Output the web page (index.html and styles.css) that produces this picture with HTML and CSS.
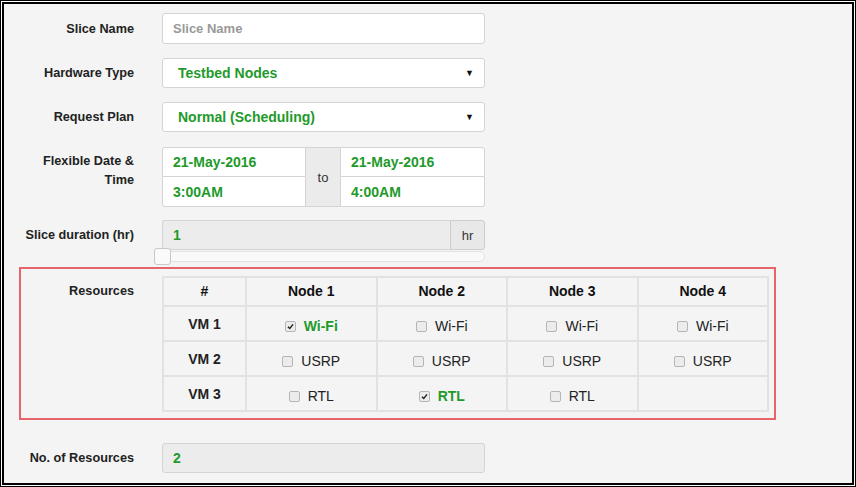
FILE: index.html
```html
<!DOCTYPE html>
<html>
<head>
<meta charset="utf-8">
<link rel="stylesheet" href="styles.css">
</head>
<body>
<div class="frame">
  <div class="inner">
    <div class="row r1">
      <div class="label">Slice Name</div>
      <div class="field"><span class="placeholder">Slice Name</span></div>
    </div>
    <div class="row r2">
      <div class="label">Hardware Type</div>
      <div class="field select"><span class="val sel">Testbed Nodes</span><span class="arrow">▼</span></div>
    </div>
    <div class="row r3">
      <div class="label">Request Plan</div>
      <div class="field select"><span class="val sel">Normal (Scheduling)</span><span class="arrow">▼</span></div>
    </div>
    <div class="row r4">
      <div class="label two">Flexible Date &amp;<br>Time</div>
      <div class="dategrid">
        <div class="dcell tl"><span class="val">21-May-2016</span></div>
        <div class="to">to</div>
        <div class="dcell tr"><span class="val">21-May-2016</span></div>
        <div class="dcell bl"><span class="val">3:00AM</span></div>
        <div class="dcell br"><span class="val">4:00AM</span></div>
      </div>
    </div>
    <div class="row r5">
      <div class="label">Slice duration (hr)</div>
      <div class="duration">
        <div class="dinput"><span class="val">1</span></div>
        <div class="addon">hr</div>
      </div>
    </div>
    <div class="row r6">
      <div class="label"></div>
      <div class="slider"><div class="handle"></div></div>
    </div>
    <div class="resbox">
      <div class="label rlabel">Resources</div>
      <table class="res">
        <thead>
          <tr><th class="c0">#</th><th>Node 1</th><th>Node 2</th><th>Node 3</th><th>Node 4</th></tr>
        </thead>
        <tbody>
          <tr>
            <td class="vm">VM 1</td>
            <td><span class="cb on"><svg viewBox="0 0 10 10"><path d="M2.2 5.2 L4.2 7.2 L7.8 2.6" fill="none" stroke="#222" stroke-width="1.6"/></svg></span><span class="chk">Wi-Fi</span></td>
            <td><span class="cb"></span><span>Wi-Fi</span></td>
            <td><span class="cb"></span><span>Wi-Fi</span></td>
            <td><span class="cb"></span><span>Wi-Fi</span></td>
          </tr>
          <tr>
            <td class="vm">VM 2</td>
            <td><span class="cb"></span><span>USRP</span></td>
            <td><span class="cb"></span><span>USRP</span></td>
            <td><span class="cb"></span><span>USRP</span></td>
            <td><span class="cb"></span><span>USRP</span></td>
          </tr>
          <tr>
            <td class="vm">VM 3</td>
            <td><span class="cb"></span><span>RTL</span></td>
            <td><span class="cb on"><svg viewBox="0 0 10 10"><path d="M2.2 5.2 L4.2 7.2 L7.8 2.6" fill="none" stroke="#222" stroke-width="1.6"/></svg></span><span class="chk">RTL</span></td>
            <td><span class="cb"></span><span>RTL</span></td>
            <td></td>
          </tr>
        </tbody>
      </table>
    </div>
    <div class="row r7">
      <div class="label">No. of Resources</div>
      <div class="field grey"><span class="val">2</span></div>
    </div>
  </div>
</div>
</body>
</html>
```

FILE: styles.css
```css
* { box-sizing: border-box; }
html, body { margin: 0; padding: 0; }
body {
  font-family: "Liberation Sans", Arial, sans-serif;
  color: #222;
  background: #fff;
}
.frame {
  width: 856px;
  height: 487px;
  border: 1px solid #000;
  padding: 1px;
  background: #fff;
}
.inner {
  height: 100%;
  border: 2px solid #000;
  background: #f4f4f4;
  padding-top: 9px;
  overflow: hidden;
}
.row {
  display: flex;
  gap: 28px;
  align-items: center;
}
.label {
  width: 130px;
  flex: none;
  text-align: right;
  font-weight: bold;
  font-size: 12.7px;
  color: #222;
}
.label.two {
  align-self: flex-start;
  line-height: 19px;
  padding-top: 5px;
}
.field {
  width: 323px;
  height: 31px;
  border: 1px solid #d4d4d4;
  border-radius: 3px;
  background: #fff;
  display: flex;
  align-items: center;
  padding-left: 10px;
  position: relative;
  font-size: 14px;
}
.field.grey { background: #ececec; height: 30px; }
.placeholder { color: #999; font-size: 13px; font-weight: bold; }
.val { color: #1e9a2a; font-weight: bold; font-size: 14px; }
.val.sel { padding-left: 5px; }
.select { padding-right: 10px; justify-content: space-between; }
.arrow { font-size: 9px; color: #111; }
.r2 { margin-top: 14px; }
.r2 .field, .r3 .field { height: 30px; }
.r3 { margin-top: 14px; }
.r4 { margin-top: 15px; }
.dategrid {
  display: grid;
  grid-template-columns: 144px 34px 145px;
  grid-template-rows: 30px 30px;
  width: 323px;
}
.dcell {
  background: #fff;
  border: 1px solid #d4d4d4;
  display: flex;
  align-items: center;
  padding-left: 10px;
}
.tl { border-radius: 3px 0 0 0; }
.bl { border-radius: 0 0 0 3px; border-top: none; }
.tr { border-radius: 0 3px 0 0; }
.br { border-radius: 0 0 3px 0; border-top: none; }
.to {
  grid-row: 1 / 3;
  grid-column: 2;
  background: #ebebeb;
  border-top: 1px solid #d4d4d4;
  border-bottom: 1px solid #d4d4d4;
  display: flex;
  align-items: center;
  justify-content: center;
  font-size: 13px;
  color: #333;
}
.tl { grid-column: 1; grid-row: 1; }
.tr { grid-column: 3; grid-row: 1; }
.bl { grid-column: 1; grid-row: 2; }
.br { grid-column: 3; grid-row: 2; }
.r5 { margin-top: 13px; }
.duration {
  display: flex;
  width: 323px;
  height: 30px;
}
.dinput {
  flex: 1;
  background: #ececec;
  border: 1px solid #d4d4d4;
  border-right: none;
  border-radius: 3px 0 0 3px;
  display: flex;
  align-items: center;
  padding-left: 10px;
}
.addon {
  width: 35px;
  background: #e8e8e8;
  border: 1px solid #ccc;
  border-radius: 0 3px 3px 0;
  display: flex;
  align-items: center;
  justify-content: center;
  font-size: 13px;
  color: #333;
}
.r6 { height: 13px; align-items: flex-start; }
.slider {
  position: relative;
  width: 323px;
  height: 11px;
  margin-top: 1px;
  background: #f9f9f9;
  border: 1px solid #e2e2e2;
  border-radius: 5px;
}
.handle {
  position: absolute;
  left: -9px;
  top: -4px;
  width: 17px;
  height: 17px;
  background: #fafafa;
  border: 1px solid #c8c8c8;
  border-radius: 3px;
}
.resbox {
  margin: 4px 0 0 15px;
  width: 757px;
  height: 153px;
  border: 2px solid #e8646c;
  display: flex;
  gap: 28px;
  padding-top: 7px;
}
.rlabel {
  width: 113px;
  padding-top: 8px;
}
.res {
  border-collapse: collapse;
  width: 607px;
  height: 135px;
  table-layout: fixed;
  border: 2px solid #e2e2e2;
  font-size: 14px;
}
.res th, .res td {
  border: 2px solid #e2e2e2;
  text-align: center;
  padding: 0;
}
.res th { height: 29px; font-weight: bold; font-size: 14px; color: #111; padding-bottom: 1px; }
.res th.c0 { width: 83px; }
.res td { height: 35px; color: #222; padding-top: 4px; }
.res td.vm { font-weight: bold; padding-top: 0; }
.cb {
  display: inline-block;
  width: 11px;
  height: 11px;
  border: 1px solid #b5b5b5;
  border-radius: 2px;
  background: #ececec;
  vertical-align: -1px;
  margin-right: 8px;
  position: relative;
}
.cb svg {
  position: absolute;
  left: 0;
  top: 0;
  width: 9px;
  height: 9px;
}
.chk { color: #1e9a2a; font-weight: bold; }
.r7 { margin-top: 23px; }
```
